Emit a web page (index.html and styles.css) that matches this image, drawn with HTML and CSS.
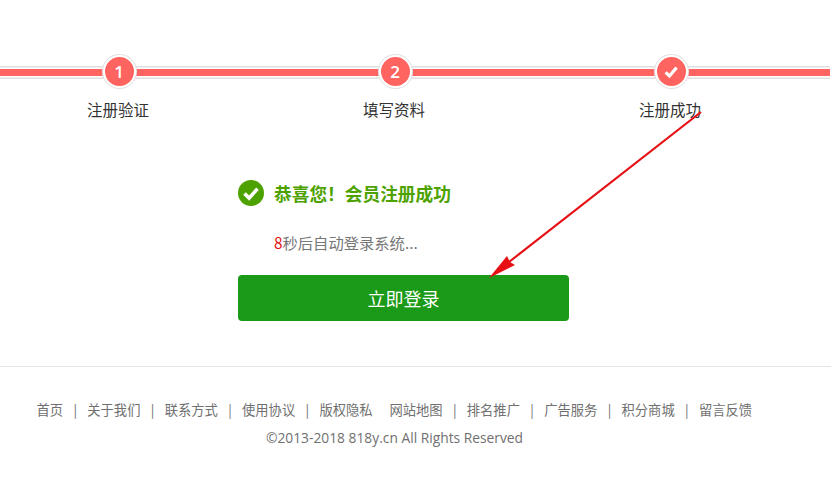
FILE: index.html
```html
<!DOCTYPE html>
<html lang="en">
<head>
    <meta charset="UTF-8">
    <title>注册成功</title>
    <link rel="stylesheet" href="styles.css">
</head>
<body>
<div id="app">
    <section class="steps">
        <div class="steps-line"></div>
        <ul class="steps-list">
            <li class="step">
                <span class="step-num">1</span>
                <p class="step-name">注册验证</p>
            </li>
            <li class="step">
                <span class="step-num">2</span>
                <p class="step-name">填写资料</p>
            </li>
            <li class="step">
                <span class="step-num">
                    <svg width="18" height="18" viewBox="0 0 18 18"><path d="M3.6 9.4l3.8 3.6L14.6 4.6" fill="none" stroke="#fff" stroke-width="3.2"/></svg>
                </span>
                <p class="step-name">注册成功</p>
            </li>
        </ul>
    </section>
    <section class="result">
        <div class="result-title">
            <svg class="result-icon" width="26" height="26" viewBox="0 0 26 26">
                <circle cx="13" cy="13" r="13" fill="#4ea200"/>
                <path d="M6.5 13.5l4.6 4.6 8.4-9.4" fill="none" stroke="#fff" stroke-width="3.6"/>
            </svg>
            恭喜您！会员注册成功
        </div>
        <p class="result-tip"><span class="count">8</span>秒后自动登录系统...</p>
        <a class="login-btn" href="#">立即登录</a>
    </section>
    <footer class="footer">
        <nav class="footer-links">
            <a href="#">首页</a><i>|</i>
            <a href="#">关于我们</a><i>|</i>
            <a href="#">联系方式</a><i>|</i>
            <a href="#">使用协议</a><i>|</i>
            <a href="#">版权隐私</a><i class="blank"></i>
            <a href="#">网站地图</a><i>|</i>
            <a href="#">排名推广</a><i>|</i>
            <a href="#">广告服务</a><i>|</i>
            <a href="#">积分商城</a><i>|</i>
            <a href="#">留言反馈</a>
        </nav>
        <p class="copyright">©2013-2018 818y.cn All Rights Reserved</p>
    </footer>
    <!-- red arrow drawn over the page -->
    <svg class="arrow" width="831" height="490" viewBox="0 0 831 490">
        <path d="M701 112L509 262" stroke="#e60f14" stroke-width="2.2" fill="none"/>
        <path d="M489 278L507 256L510 262L515 265Z" fill="#e60f14"/>
    </svg>
</div>
</body>
</html>
```

FILE: styles.css
```css
* {
    margin: 0;
    padding: 0;
    box-sizing: border-box;
}

ul {
    list-style: none;
}

html, body, #app {
    width: 100%;
    height: 100%;
    overflow: hidden;
}

body {
    background: #fff;
    font-family: "Noto Sans CJK SC", "Open Sans", sans-serif;
}

#app {
    position: relative;
}

a {
    text-decoration: none;
}

.steps {
    position: relative;
    padding-top: 55px;
    height: 130px;
}

.steps-line {
    position: absolute;
    left: 0;
    top: 69px;
    width: 830px;
    height: 7px;
    background: #ff6461;
    box-shadow: 0 0 0 1.5px #fff, 0 0 0 3px #dfdfdf;
    clip-path: inset(-3px 0);
}

.steps-list {
    position: relative;
    display: flex;
    margin-left: -19px;
}

.step {
    width: 276px;
    display: flex;
    flex-direction: column;
    align-items: center;
}

.step-num {
    width: 33px;
    height: 33px;
    border-radius: 50%;
    background: #ff6461;
    border: 2px solid #fff;
    box-shadow: 0 0 0 1px #e2e2e2;
    color: #fff;
    font: 600 17px/27px "Open Sans", sans-serif;
    display: flex;
    align-items: center;
    justify-content: center;
}

.step-name {
    margin-top: 8px;
    margin-right: 2px;
    font-size: 15.5px;
    line-height: 26px;
    color: #333;
}

.result {
    width: 331px;
    margin-left: 238px;
    padding-top: 50px;
}

.result-title {
    display: flex;
    align-items: center;
    gap: 10px;
    height: 26px;
    font-size: 17.7px;
    font-weight: bold;
    color: #4ea200;
}

.result-tip {
    margin-top: 23px;
    padding-left: 36px;
    font-size: 15.3px;
    line-height: 26px;
    color: #777;
}

.count {
    color: #e31010;
}

.login-btn {
    display: block;
    margin-top: 20px;
    height: 46px;
    line-height: 46px;
    border-radius: 4px;
    background: #1a9a18;
    color: #fff;
    font-size: 18px;
    text-align: center;
}

.footer {
    margin-top: 45px;
    border-top: 1px solid #e4e4e4;
    padding-top: 33px;
}

.footer-links {
    display: flex;
    align-items: center;
    margin-left: 36.5px;
    font-size: 13.3px;
    line-height: 20px;
}

.footer-links a {
    color: #707070;
}

.footer-links i {
    width: 24.2px;
    text-align: center;
    font-style: normal;
    color: #707070;
}

.footer-links .blank {
    width: 16.8px;
}

.copyright {
    margin-top: 8px;
    margin-left: -42px;
    text-align: center;
    font: 13.8px/20px "Open Sans", sans-serif;
    color: #707070;
}

.arrow {
    position: absolute;
    left: 0;
    top: 0;
    pointer-events: none;
}
```
